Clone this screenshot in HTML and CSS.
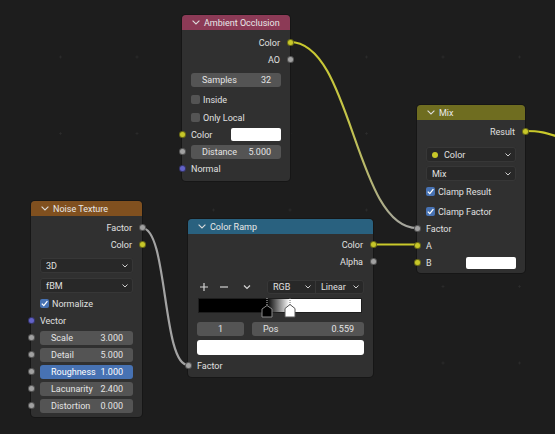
FILE: index.html
```html
<!DOCTYPE html>
<html>
<head>
<meta charset="utf-8">
<link rel="stylesheet" href="styles.css">
</head>
<body>
<div class="canvas">
  <svg class="links" width="555" height="434" viewBox="0 0 555 434">
    <defs>
      <linearGradient id="g1" gradientUnits="userSpaceOnUse" x1="290" y1="42" x2="417" y2="228">
        <stop offset="0" stop-color="#c9c92b"/>
        <stop offset="0.45" stop-color="#c4c44c"/>
        <stop offset="1" stop-color="#a3a3a3"/>
      </linearGradient>
    </defs>
    <path class="lk lk-grad" d="M290 42 C352 42 355 228 417 228"/>
    <path class="lk lk-y" d="M373 244.5 L417 244.5"/>
    <path class="lk lk-g" d="M142 228 C168 228 162 365 188 365"/>
    <path class="lk lk-y" d="M525 131 C545 131 548 134 575 142"/>
  </svg>

  <!-- Ambient Occlusion -->
  <div class="node ao">
    <div class="hdr">
      <svg class="chev" width="8" height="5" viewBox="0 0 8 5"><path d="M0.6 0.6 L4 4 L7.4 0.6"/></svg>
      <span>Ambient Occlusion</span>
    </div>
    <div class="body">
      <div class="row out"><span>Color</span><i class="sock r y"></i></div>
      <div class="row out"><span>AO</span><i class="sock r g"></i></div>
      <div class="field mt5"><span>Samples</span><span>32</span></div>
      <div class="row mt4"><i class="cb"></i><span>Inside</span></div>
      <div class="row mt1"><i class="cb"></i><span>Only Local</span></div>
      <div class="row"><i class="sock l y"></i><span>Color</span><i class="swatch"></i></div>
      <div class="row"><i class="sock l g"></i><div class="field grow"><span>Distance</span><span>5.000</span></div></div>
      <div class="row"><i class="sock l p"></i><span>Normal</span></div>
    </div>
  </div>

  <!-- Mix -->
  <div class="node mix">
    <div class="hdr">
      <svg class="chev" width="8" height="5" viewBox="0 0 8 5"><path d="M0.6 0.6 L4 4 L7.4 0.6"/></svg>
      <span>Mix</span>
    </div>
    <div class="body">
      <div class="row out"><span>Result</span><i class="sock r y"></i></div>
      <div class="dd mt7"><i class="dot"></i><span>Color</span><svg class="ddchev" width="6" height="4" viewBox="0 0 6 4"><path d="M0.5 0.5 L3 3 L5.5 0.5"/></svg></div>
      <div class="dd mt4"><span>Mix</span><svg class="ddchev" width="6" height="4" viewBox="0 0 6 4"><path d="M0.5 0.5 L3 3 L5.5 0.5"/></svg></div>
      <div class="row mt2"><i class="cb on"><svg width="9" height="9" viewBox="0 0 9 9"><path d="M1.8 4.6 L3.8 6.6 L7.4 2.2"/></svg></i><span>Clamp Result</span></div>
      <div class="row mt3"><i class="cb on"><svg width="9" height="9" viewBox="0 0 9 9"><path d="M1.8 4.6 L3.8 6.6 L7.4 2.2"/></svg></i><span>Clamp Factor</span></div>
      <div class="row"><i class="sock l g"></i><span>Factor</span></div>
      <div class="row"><i class="sock l y"></i><span>A</span></div>
      <div class="row"><i class="sock l y"></i><span>B</span><i class="swatch s12"></i></div>
    </div>
  </div>

  <!-- Noise Texture -->
  <div class="node noise">
    <div class="hdr">
      <svg class="chev" width="8" height="5" viewBox="0 0 8 5"><path d="M0.6 0.6 L4 4 L7.4 0.6"/></svg>
      <span>Noise Texture</span>
    </div>
    <div class="body">
      <div class="row out"><span>Factor</span><i class="sock r g"></i></div>
      <div class="row out"><span>Color</span><i class="sock r y"></i></div>
      <div class="dd mt5"><span>3D</span><svg class="ddchev" width="6" height="4" viewBox="0 0 6 4"><path d="M0.5 0.5 L3 3 L5.5 0.5"/></svg></div>
      <div class="dd mt5"><span>fBM</span><svg class="ddchev" width="6" height="4" viewBox="0 0 6 4"><path d="M0.5 0.5 L3 3 L5.5 0.5"/></svg></div>
      <div class="row mt2"><i class="cb on"><svg width="9" height="9" viewBox="0 0 9 9"><path d="M1.8 4.6 L3.8 6.6 L7.4 2.2"/></svg></i><span>Normalize</span></div>
      <div class="row"><i class="sock l p"></i><span>Vector</span></div>
      <div class="row"><i class="sock l g"></i><div class="field grow"><span>Scale</span><span>3.000</span></div></div>
      <div class="row"><i class="sock l g"></i><div class="field grow"><span>Detail</span><span>5.000</span></div></div>
      <div class="row"><i class="sock l g"></i><div class="field grow sel"><span>Roughness</span><span>1.000</span></div></div>
      <div class="row"><i class="sock l g"></i><div class="field grow"><span>Lacunarity</span><span>2.400</span></div></div>
      <div class="row"><i class="sock l g"></i><div class="field grow"><span>Distortion</span><span>0.000</span></div></div>
    </div>
  </div>

  <!-- Color Ramp -->
  <div class="node ramp">
    <div class="hdr">
      <svg class="chev" width="8" height="5" viewBox="0 0 8 5"><path d="M0.6 0.6 L4 4 L7.4 0.6"/></svg>
      <span>Color Ramp</span>
    </div>
    <div class="body">
      <div class="row out"><span>Color</span><i class="sock r y"></i></div>
      <div class="row out"><span>Alpha</span><i class="sock r g"></i></div>
      <div class="tb mt10">
        <svg class="ic" width="14" height="14" viewBox="0 0 14 14"><path d="M3 7 H11 M7 3 V11"/></svg>
        <svg class="ic ml6" width="14" height="14" viewBox="0 0 14 14"><path d="M3 7 H11"/></svg>
        <svg class="ic ml9" width="14" height="14" viewBox="0 0 14 14"><path d="M4 5.5 L7 8.5 L10 5.5"/></svg>
        <div class="ddgroup">
          <div class="dd seg l"><span>RGB</span><svg class="ddchev" width="6" height="4" viewBox="0 0 6 4"><path d="M0.5 0.5 L3 3 L5.5 0.5"/></svg></div>
          <div class="dd seg r"><span>Linear</span><svg class="ddchev" width="6" height="4" viewBox="0 0 6 4"><path d="M0.5 0.5 L3 3 L5.5 0.5"/></svg></div>
        </div>
      </div>
      <div class="rampbar mt4">
        <svg class="stop s1" width="12" height="20" viewBox="0 0 12 20"><path class="dash" d="M6 0 V8"/><path class="blk" d="M1 11 L6 7.5 L11 11 V19 H1 Z"/></svg>
        <svg class="stop s2" width="12" height="20" viewBox="0 0 12 20"><path class="dash2" d="M6 0 V7"/><path class="wht" d="M1 10.5 L6 6.5 L11 10.5 V19 H1 Z"/></svg>
      </div>
      <div class="frow mt9">
        <div class="field num"><span>1</span></div>
        <div class="field grow"><span>Pos</span><span>0.559</span></div>
      </div>
      <div class="bigsw mt4"></div>
      <div class="row mt2"><i class="sock l g"></i><span>Factor</span></div>
    </div>
  </div>
</div>
</body>
</html>
```
FILE: styles.css
```css
* { box-sizing: border-box; }
body {
  margin: 0;
  background: #1d1d1d;
  font-family: Roboto, "DejaVu Sans", sans-serif;
  font-size: 9px;
  color: #e0e0e0;
}
.canvas {
  position: relative;
  width: 555px;
  height: 434px;
  overflow: hidden;
  background-color: #1d1d1d;
  background-image: radial-gradient(circle, #2c2c2c 0.8px, transparent 1.4px);
  background-size: 76.5px 76.5px;
  background-position: 22.25px 18.75px;
}
.links { position: absolute; left: 0; top: 0; }
.lk { fill: none; stroke-width: 2.2; stroke-linecap: round; }
.lk-y { stroke: #c9c92b; }
.lk-g { stroke: #a3a3a3; }
.lk-grad { stroke: url(#g1); }

.node {
  position: absolute;
  background: #303030;
  border-radius: 4px;
  box-shadow: 0 0 0 1px #161616;
  display: flex;
  flex-direction: column;
}
.hdr {
  height: 15px;
  border-radius: 4px 4px 0 0;
  display: flex;
  align-items: center;
  padding-left: 10px;
  gap: 4px;
  color: #e8e8e8;
}
.chev path { fill: none; stroke: #dcdcdc; stroke-width: 1.1; }
.ao { left: 182px; top: 15px; width: 108px; }
.ao .hdr { background: #8c3a56; }
.mix { left: 417px; top: 105px; width: 108px; }
.mix .hdr { background: #6f6d20; }
.noise { left: 31px; top: 201px; width: 111px; }
.noise .hdr { background: #80501f; }
.ramp { left: 188px; top: 219px; width: 185px; }
.ramp .hdr { background: #29617f; }

.body { display: flex; flex-direction: column; padding: 3px 9px 2px; }
.ao .body { padding: 4px 9px 4px; }
.noise .body { padding: 3px 9px 3px; }
.ramp .body { padding: 2px 9px 3px; }

.row {
  height: 17px;
  display: flex;
  align-items: center;
  position: relative;
}
.row.out { justify-content: flex-end; padding-right: 1px; }
.mt1 { margin-top: 1px; }
.mt2 { margin-top: 2px; }
.mt3 { margin-top: 3px; }
.mt4 { margin-top: 4px; }
.mt5 { margin-top: 5px; }
.mt7 { margin-top: 7px; }
.mt9 { margin-top: 9px; }
.mt10 { margin-top: 10px; }

.sock {
  position: absolute;
  top: 50%;
  width: 7px;
  height: 7px;
  margin-top: -3.5px;
  border-radius: 50%;
  border: 1px solid rgba(0, 0, 0, 0.45);
}
.sock.l { left: -12.5px; }
.sock.r { right: -12.5px; }
.sock.y { background: #c7c729; }
.sock.g { background: #a1a1a1; }
.sock.p { background: #6363c7; }

.field {
  height: 14px;
  background: #545454;
  border-radius: 3px;
  display: flex;
  align-items: center;
  justify-content: space-between;
  padding: 0 10px 0 11px;
  color: #e4e4e4;
}
.field.grow { flex: 1; }
.field.sel { background: #4772b3; color: #fff; }

.cb {
  width: 9px;
  height: 9px;
  border-radius: 2px;
  background: #545454;
  margin-right: 3px;
  display: flex;
}
.cb.on { background: #4772b3; }
.cb svg path { fill: none; stroke: #fff; stroke-width: 1.3; }

.swatch {
  margin-left: auto;
  width: 50px;
  height: 13px;
  background: #fff;
  border-radius: 2px;
}
.swatch.s12 { height: 12px; }

.dd {
  height: 15px;
  background: #282828;
  border-radius: 3px;
  box-shadow: inset 0 0 0 1px #373737;
  display: flex;
  align-items: center;
  padding: 0 4px 0 6px;
  color: #e0e0e0;
}
.dd .dot {
  width: 6px;
  height: 6px;
  border-radius: 50%;
  background: #c7c729;
  margin: 0 6px 0 0;
}
.ddchev { margin-left: auto; margin-right: 1px; }
.ddchev path { fill: none; stroke: #cfcfcf; stroke-width: 1; }

.tb { height: 14px; display: flex; align-items: center; }
.ic path { fill: none; stroke: #d4d4d4; stroke-width: 1.2; }
.ml6 { margin-left: 6px; }
.ml9 { margin-left: 9px; }
.ddgroup { margin-left: auto; display: flex; width: 97px; height: 14px; }
.dd.seg { flex: 1; height: 14px; }
.dd.seg.l { border-radius: 3px 0 0 3px; }
.dd.seg.r { border-radius: 0 3px 3px 0; margin-left: -1px; }

.rampbar {
  position: relative;
  height: 15px;
  margin-left: 1px;
  margin-right: 2px;
  border: 1px solid #1e1e1e;
  background: linear-gradient(to right, #000 0%, #000 42.1%, #fff 55.9%, #fff 100%);
}
.stop { position: absolute; top: -1px; }
.s1 { left: 62px; }
.s2 { left: 85px; }
.dash { stroke: #c8c8c8; stroke-width: 1; stroke-dasharray: 1 1; }
.dash2 { stroke: #6a6a6a; stroke-width: 1; stroke-dasharray: 1 1; }
.blk { fill: #000; stroke: #8a8a8a; stroke-width: 1; }
.wht { fill: #fff; stroke: #555; stroke-width: 1; }

.frow { display: flex; gap: 8px; height: 14px; }
.field.num { width: 47px; justify-content: center; padding: 0; }
.bigsw { height: 15px; background: #fff; border-radius: 3px; }
```
